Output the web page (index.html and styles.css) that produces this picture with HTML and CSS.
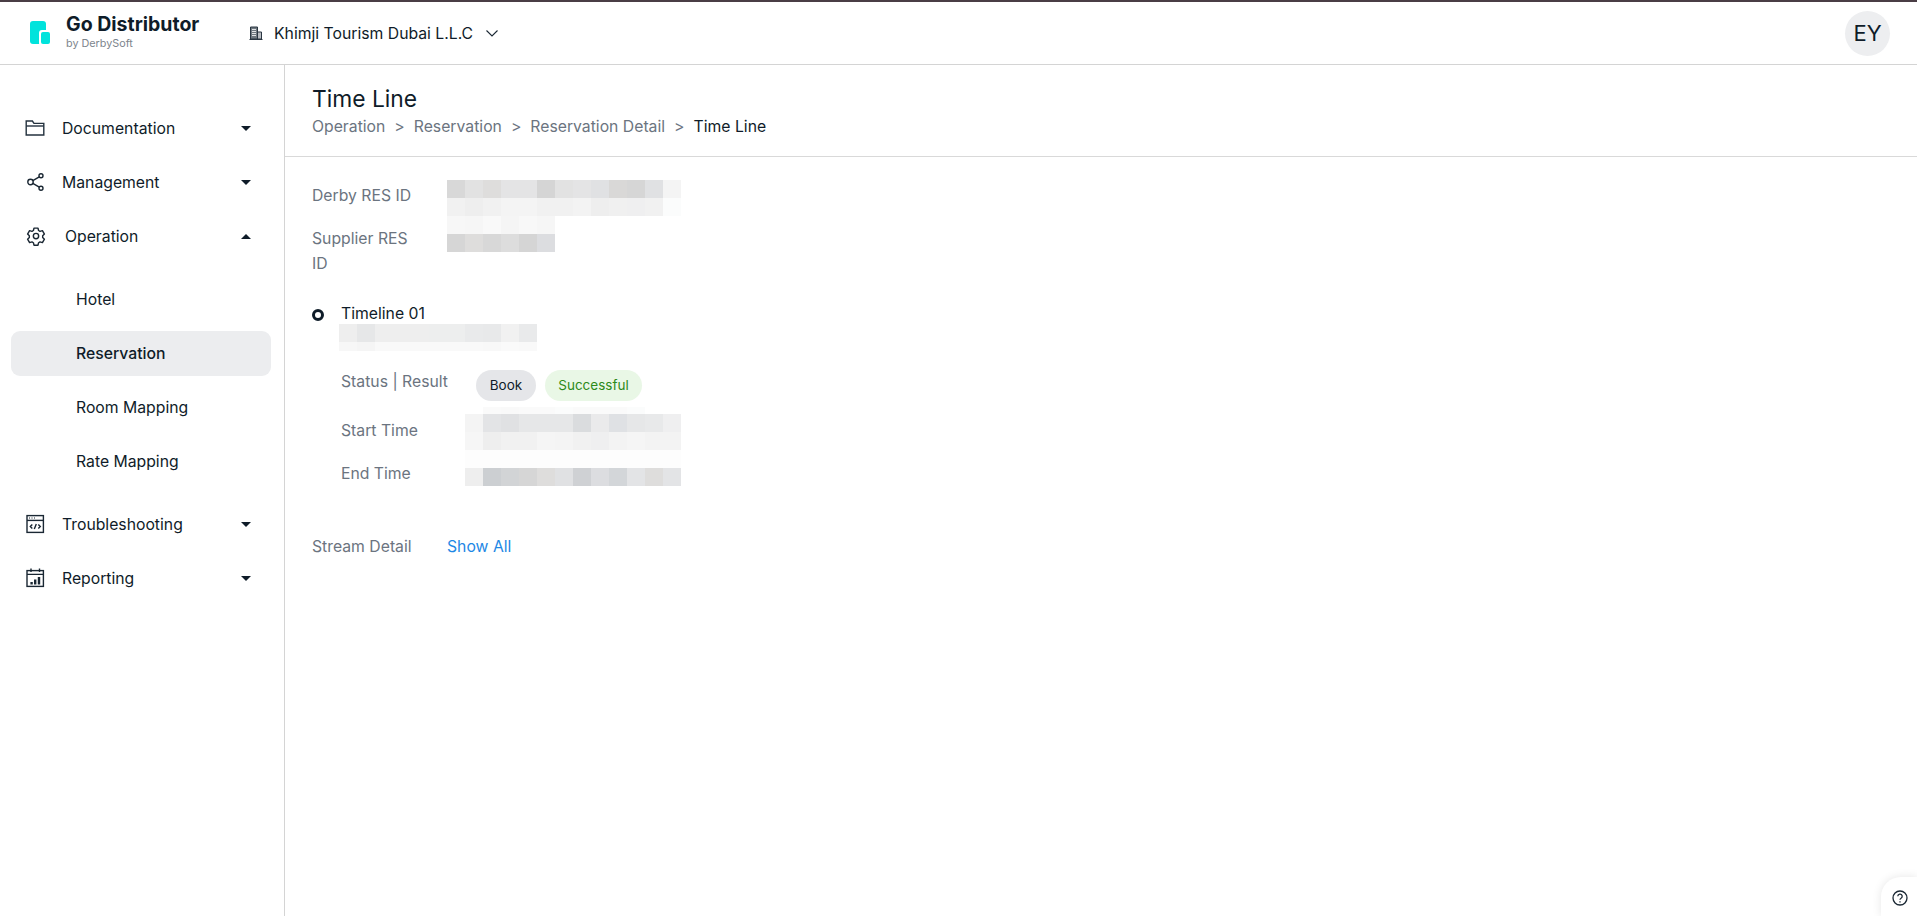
FILE: index.html
```html
<!DOCTYPE html>
<html lang="en">
<head>
<meta charset="utf-8">
<title>Go Distributor</title>
<link rel="stylesheet" href="styles.css">
</head>
<body>
<header class="topbar">
  <div class="brand">
    <svg class="logo" width="24" height="26" viewBox="0 0 24 26"><rect x="1" y="1" width="16" height="23" rx="3" fill="#00e3dc"/><rect x="10" y="10" width="14" height="16" rx="3" fill="#fff"/><rect x="12" y="12" width="9" height="12" rx="2" fill="#00e3dc"/></svg>
    <div class="brand-text">
      <div class="brand-name">Go Distributor</div>
      <div class="brand-sub">by DerbySoft</div>
    </div>
  </div>
  <div class="org">
    <svg width="14" height="14" viewBox="0 0 14 14" fill="none" stroke="#2a3642"><path d="M.5 13.500h13" stroke-width="1"/><path d="M1.500 13V1h7v12z" fill="#6f7880"/><path d="M8.500 6h4v7h-4z" fill="#b9bdc2"/><path d="M3 3.500h4M3 5.500h4M3 7.500h4M3 9.500h4" stroke="#fff" stroke-width=".8"/></svg>
    <span class="org-name">Khimji Tourism Dubai L.L.C</span>
    <svg width="14" height="14" viewBox="0 0 14 14" fill="none" stroke="#1a2733" stroke-width="1.100"><path d="M1.500 4.500 7 10l5.500-5.500"/></svg>
  </div>
  <div class="avatar">EY</div>
</header>
<div class="body">
  <nav class="sidebar">
    <a class="nav-item">
      <svg class="nav-icon" width="20" height="20" viewBox="0 0 20 20" fill="none" stroke="#24323f" stroke-width="1.400"><path d="M1.200 17V3h6.200l1.600 2.400h9.800V17z"/><path d="M1.200 8h17.600"/></svg>
      <span class="nav-label">Documentation</span><i class="caret"></i>
    </a>
    <a class="nav-item">
      <svg class="nav-icon" width="20" height="20" viewBox="0 0 20 20" fill="none" stroke="#1a2733" stroke-width="1.400"><circle cx="5.500" cy="10" r="2.700"/><circle cx="16" cy="3.800" r="2"/><circle cx="16" cy="16.200" r="2"/><path d="m7.800 8.600 6.500-3.800M7.800 11.400l6.500 3.800"/></svg>
      <span class="nav-label">Management</span><i class="caret"></i>
    </a>
    <a class="nav-item">
      <svg class="nav-icon gear" width="20" height="20" viewBox="0 0 24 24" fill="none" stroke="#1a2733" stroke-width="1.700" stroke-linejoin="round"><circle cx="12" cy="12" r="3.200"/><path d="M9.600 2.500h4.800l.7 2.900 1.700 1 2.900-.8 2.400 4.100-2.100 2.100v1.900l2.100 2.100-2.400 4.100-2.900-.8-1.700 1-.7 2.900H9.600l-.7-2.900-1.700-1-2.900.8-2.400-4.100 2.100-2.100v-1.900L1.900 9.700l2.400-4.100 2.900.8 1.700-1z"/></svg>
      <span class="nav-label">Operation</span><i class="caret up"></i>
    </a>
    <div class="sub-list">
      <a class="sub-item"><span class="sub-text">Hotel</span></a>
      <a class="sub-item active"><span class="sub-text">Reservation</span></a>
      <a class="sub-item"><span class="sub-text">Room Mapping</span></a>
      <a class="sub-item"><span class="sub-text">Rate Mapping</span></a>
    </div>
    <a class="nav-item">
      <svg class="nav-icon" width="20" height="20" viewBox="0 0 20 20" fill="none" stroke="#1a2733" stroke-width="1.400"><rect x="2" y="1.600" width="16.400" height="16.800"/><path d="M2 6.400h16.400"/><path d="M4 4h1M6.500 4h1M9 4h1" stroke-width="1.200"/><path d="M7.300 10.500 5.300 12.500l2 2M13.300 10.500l2 2-2 2M11.300 10l-2 5"/></svg>
      <span class="nav-label">Troubleshooting</span><i class="caret"></i>
    </a>
    <a class="nav-item">
      <svg class="nav-icon" width="20" height="20" viewBox="0 0 20 20" fill="none" stroke="#1a2733" stroke-width="1.400"><rect x="2" y="2.600" width="16.400" height="15.800"/><path d="M2 6.400h16.400M6 .6v3.500M14.500 .6v3.500"/><path d="M5.400 14h2.400v2.500H5.400zM9 11.500h2.400v5H9zM12.800 9h2.400v7.500h-2.400z" fill="#1a2733" stroke="none"/></svg>
      <span class="nav-label">Reporting</span><i class="caret"></i>
    </a>
  </nav>
  <main class="main">
    <section class="page-head">
      <h1 class="page-title">Time Line</h1>
      <div class="crumbs">
        <span>Operation</span><span class="sep">&gt;</span><span>Reservation</span><span class="sep">&gt;</span><span>Reservation Detail</span><span class="sep">&gt;</span><span class="current">Time Line</span>
      </div>
    </section>
    <section class="content">
      <div class="field field-derby">
        <div class="label">Derby RES ID</div>
        <div class="tiles n13">
          <i class="d8"></i><i class="e2"></i><i class="de"></i><i class="e4"></i><i class="e4"></i><i class="d5"></i><i class="e2"></i><i class="e4"></i><i class="e0"></i><i class="d9"></i><i class="d6"></i><i class="e0"></i><i class="f4"></i>
          <i class="f1"></i><i class="ee"></i><i class="f1"></i><i class="f4"></i><i class="f4"></i><i class="f1"></i><i class="f1"></i><i class="f3"></i><i class="ee"></i><i class="f0"></i><i class="ef"></i><i class="f1"></i><i class="fb"></i>
        </div>
      </div>
      <div class="field field-supplier">
        <div class="label">Supplier RES ID</div>
        <div class="tiles n6">
          <i class="f7"></i><i class="f6"></i><i class="f9"></i><i class="f5"></i><i class="f8"></i><i class="f6"></i>
          <i class="d6"></i><i class="de"></i><i class="d8"></i><i class="dd"></i><i class="d5"></i><i class="dc"></i>
        </div>
      </div>
      <div class="timeline">
        <div class="tl-head"><span class="dot"></span><span class="tl-title">Timeline 01</span></div>
        <div class="tiles n11 half tl-tiles">
          <i class="ee"></i><i class="e6"></i><i class="ee"></i><i class="ee"></i><i class="ee"></i><i class="ed"></i><i class="ed"></i><i class="e9"></i><i class="e8"></i><i class="f1"></i><i class="e9"></i>
          <i class="f7"></i><i class="f5"></i><i class="f9"></i><i class="f9"></i><i class="f9"></i><i class="f9"></i><i class="f9"></i><i class="f9"></i><i class="f8"></i><i class="fa"></i><i class="f9"></i>
        </div>
        <div class="status-row">
          <span class="label">Status | Result</span>
          <span class="pill pill-book">Book</span>
          <span class="pill pill-ok">Successful</span>
        </div>
        <div class="time-row time-start">
          <span class="label">Start Time</span>
          <div class="tiles n12 with-fringe">
            <i></i><i class="fa"></i><i class="f9"></i><i class="fa"></i><i class="fa"></i><i class="fb"></i><i class="fa"></i><i class="fa"></i><i class="fa"></i><i class="fb"></i><i></i><i></i>
            <i class="f4"></i><i class="e3"></i><i class="e0"></i><i class="e6"></i><i class="e6"></i><i class="e6"></i><i class="da"></i><i class="ea"></i><i class="df"></i><i class="e6"></i><i class="e8"></i><i class="ef"></i>
            <i class="f6"></i><i class="ee"></i><i class="f1"></i><i class="f1"></i><i class="f5"></i><i class="f4"></i><i class="f1"></i><i class="ef"></i><i class="f3"></i><i class="f5"></i><i class="f3"></i><i class="f3"></i>
          </div>
        </div>
        <div class="time-row time-end">
          <span class="label">End Time</span>
          <div class="tiles n12">
            <i class="fe"></i><i class="fe"></i><i class="fe"></i><i class="fe"></i><i class="fe"></i><i class="fe"></i><i class="fe"></i><i class="fe"></i><i class="fe"></i><i class="fe"></i><i class="fe"></i><i class="fe"></i>
            <i class="ee"></i><i class="cc"></i><i class="d2"></i><i class="d6"></i><i class="de"></i><i class="e0"></i><i class="cf"></i><i class="dc"></i><i class="d3"></i><i class="e3"></i><i class="de"></i><i class="e3"></i>
          </div>
        </div>
      </div>
      <div class="stream">
        <span class="label">Stream Detail</span>
        <a class="show-all">Show All</a>
      </div>
    </section>
  </main>
</div>
<button class="help" type="button" aria-label="Help">
  <svg width="16" height="16" viewBox="0 0 16 16" fill="none" stroke="#1a2733" stroke-width="1.300"><circle cx="8" cy="8" r="7"/><path d="M5.800 6.300a2.200 2.200 0 1 1 3.300 1.900c-.7.400-1.100.8-1.100 1.600"/><path d="M8 11.200v1.300"/></svg>
</button>
</body>
</html>
```
FILE: styles.css
```css
* { box-sizing: border-box; }
html, body { height: 100%; }
body {
  margin: 0;
  height: 916px;
  overflow: hidden;
  display: flex;
  flex-direction: column;
  background: #fff;
  color: #0f1c29;
  font-family: Inter, "Liberation Sans", sans-serif;
  font-size: 15.750px;
}
.topbar {
  height: 65px;
  flex: none;
  display: flex;
  align-items: center;
  border-top: 2px solid #4a3d45;
  border-bottom: 1px solid #d4d4d4;
  padding: 0 27px 0 29px;
}
.brand { display: flex; align-items: center; width: 220px; }
.logo { margin-right: 13px; }
.brand-text { display: flex; flex-direction: column; margin-top: -2px; }
.brand-name { font-size: 19.500px; font-weight: 700; line-height: 23px; margin-top: -1px; }
.brand-sub { font-size: 10.800px; line-height: 13px; color: #7d858d; margin-top: 1px; }
.org { display: flex; align-items: center; }
.org-name { margin: 0 12px 0 11px; }
.avatar {
  margin-left: auto;
  width: 45px;
  height: 45px;
  border-radius: 50%;
  background: #edeef0;
  display: flex;
  align-items: center;
  justify-content: center;
  font-size: 22px;
}
.body { flex: 1; display: flex; min-height: 0; }
.sidebar {
  width: 285px;
  flex: none;
  border-right: 1px solid #d4d4d4;
  padding-top: 36px;
}
.nav-item {
  height: 54px;
  display: flex;
  align-items: center;
  padding: 0 33px 0 25px;
}
.nav-icon { flex: none; margin-right: 17px; }
.nav-icon.gear { margin: 0 19px 0 1px; }
.nav-label { flex: 1; }
.caret {
  width: 0;
  height: 0;
  border-left: 5px solid transparent;
  border-right: 5px solid transparent;
  border-top: 5.500px solid #0f1c29;
}
.caret.up { border-top: 0; border-bottom: 5.500px solid #0f1c29; }
.sub-list { padding: 9px 13px 9px 11px; }
.sub-item { height: 54px; display: flex; align-items: center; padding-left: 65px; }
.sub-item.active { height: 45px; margin: 5px 0 4px; background: #ecedef; border-radius: 9px; font-weight: 500; }
.main { flex: 1; min-width: 0; }
.page-head { height: 92px; border-bottom: 1px solid #d9d9d9; padding: 19px 0 0 27px; }
.page-title { margin: 0; font-size: 22.800px; font-weight: 400; line-height: 30px; }
.crumbs { display: flex; color: #6b7480; line-height: 24px; margin-top: 1px; }
.sep { margin: 0 9px; }
.current { color: #0f1c29; }
.content { padding: 23px 0 0 27px; }
.label { color: #6b7480; line-height: 25px; }
.field { display: flex; }
.field .label { width: 135px; padding-right: 24px; flex: none; }
.field-derby { height: 36px; }
.field-derby .label { padding-top: 3px; }
.field-supplier { height: 85px; }
.field-supplier .label { padding-top: 10px; }
.tiles { display: grid; grid-auto-rows: 18px; }
.tiles i { display: block; }
.n13 { grid-template-columns: repeat(13, 18px); }
.n12 { grid-template-columns: repeat(12, 18px); }
.n11 { grid-template-columns: repeat(11, 18px); }
.n6 { grid-template-columns: repeat(6, 18px); }
.half { grid-template-rows: 18px 9px; }
.with-fringe { grid-template-rows: 7px 18px 18px; margin-top: -7px; }
.tl-head { display: flex; align-items: center; height: 24px; }
.dot { flex: none; width: 12px; height: 12px; margin-top: 3px; border: 3.750px solid #0f1c29; border-radius: 50%; }
.tl-title { margin-left: 17px; }
.tl-tiles { margin-left: 27px; margin-top: -1px; }
.status-row { display: flex; align-items: flex-start; height: 44px; margin: 19px 0 0 29px; }
.status-row .label { width: 135px; flex: none; line-height: 25px; margin-top: -1px; }
.pill { height: 31px; line-height: 31px; border-radius: 16px; font-size: 13.500px; text-align: center; }
.pill-book { width: 60px; background: #e5e6e9; }
.pill-ok { width: 97px; margin-left: 9px; background: #e9f7e6; color: #2d8a1a; }
.time-row { display: flex; margin-left: 29px; height: 36px; }
.time-row .label { width: 124px; flex: none; }
.time-start .label { padding-top: 4px; }
.time-end .label { padding-top: 11px; }
.stream { display: flex; margin-top: 48px; }
.stream .label { width: 135px; }
.show-all { color: #1e88e5; line-height: 25px; }
.help {
  position: fixed;
  right: 0;
  bottom: 0;
  width: 36px;
  height: 39px;
  border: 0;
  border-radius: 20px 0 0 0;
  background: #fff;
  box-shadow: 0 0 10px rgba(0,0,0,.1);
  padding: 2px 0 0 11px;
  display: flex;
  align-items: center;
}
.cc { background: #cccfd2; }
.cf { background: #cfd1d4; }
.d2 { background: #d2d4d6; }
.d3 { background: #d3d6d9; }
.d5 { background: #d5d5d5; }
.d6 { background: #d6d6d6; }
.d8 { background: #d8d8d8; }
.d9 { background: #d9d8d7; }
.da { background: #dadcde; }
.dc { background: #dcdde0; }
.dd { background: #dddddd; }
.de { background: #dedddc; }
.df { background: #dfe1e4; }
.e0 { background: #e0e1e3; }
.e2 { background: #e2e2e2; }
.e3 { background: #e3e4e6; }
.e4 { background: #e4e4e5; }
.e6 { background: #e6e7e8; }
.e8 { background: #e8e9ea; }
.e9 { background: #e9eaeb; }
.ea { background: #eaeaeb; }
.ed { background: #edeeee; }
.ee { background: #eeeeee; }
.ef { background: #efeff0; }
.f0 { background: #f0f0f0; }
.f1 { background: #f1f1f1; }
.f3 { background: #f3f3f3; }
.f4 { background: #f4f4f4; }
.f5 { background: #f5f5f5; }
.f6 { background: #f6f6f6; }
.f7 { background: #f7f7f7; }
.f8 { background: #f8f8f8; }
.f9 { background: #f9f9f9; }
.fa { background: #fafafa; }
.fb { background: #fbfcfc; }
.fe { background: #fdfdfd; }
```
